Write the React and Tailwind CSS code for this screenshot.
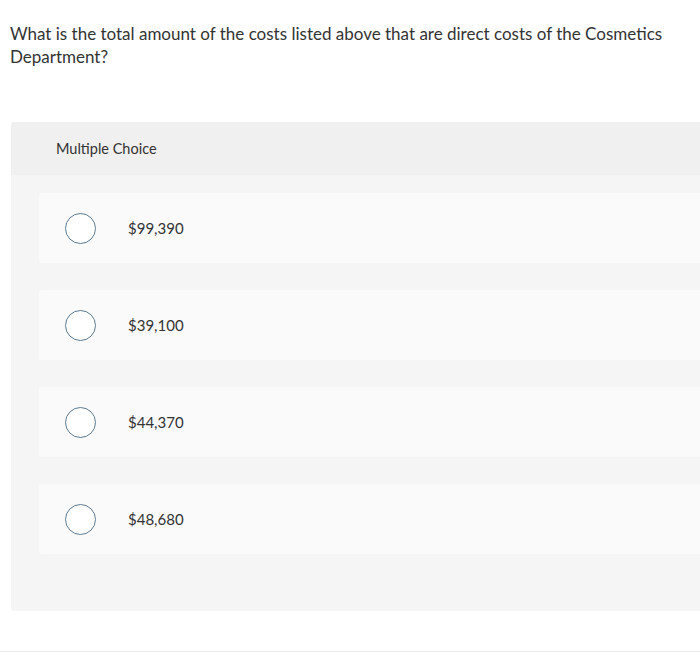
import React from 'react';

const choices = ['$99,390', '$39,100', '$44,370', '$48,680'];

const App = () => {
    return (
        <div className="w-[700px] h-[654px] bg-white overflow-hidden text-[#333]" style={{ fontFamily: 'Lato, "Open Sans", sans-serif' }}>
            {/* Question */}
            <p className="pt-[22px] pl-[10px] pr-4 text-[17px] leading-[23px]">
                What is the total amount of the costs listed above that are direct costs of the Cosmetics Department?
            </p>

            {/* Answer panel */}
            <div className="mt-[54px] ml-[11px] rounded-l-[3px] bg-[#f5f5f5] overflow-hidden">
                <div className="h-[53px] bg-[#f0f0f0] flex items-center pl-[45px] text-[14.5px]">
                    Multiple Choice
                </div>
                <div className="pt-[18px] pb-[57px] pl-[28px] flex flex-col gap-[27px]">
                    {choices.map((c) => (
                        <div key={c} className="h-[70px] bg-[#fafafa] rounded-l-[2px] flex items-center pl-[26px]">
                            <span className="w-[31px] h-[31px] rounded-full border-[1.5px] border-[#5d7b93] bg-white shrink-0" />
                            <span className="ml-[32px] text-[15px]">{c}</span>
                        </div>
                    ))}
                </div>
            </div>

            <div className="mt-[40px] h-px bg-[#ececec]" />
        </div>
    );
};

export default App;
